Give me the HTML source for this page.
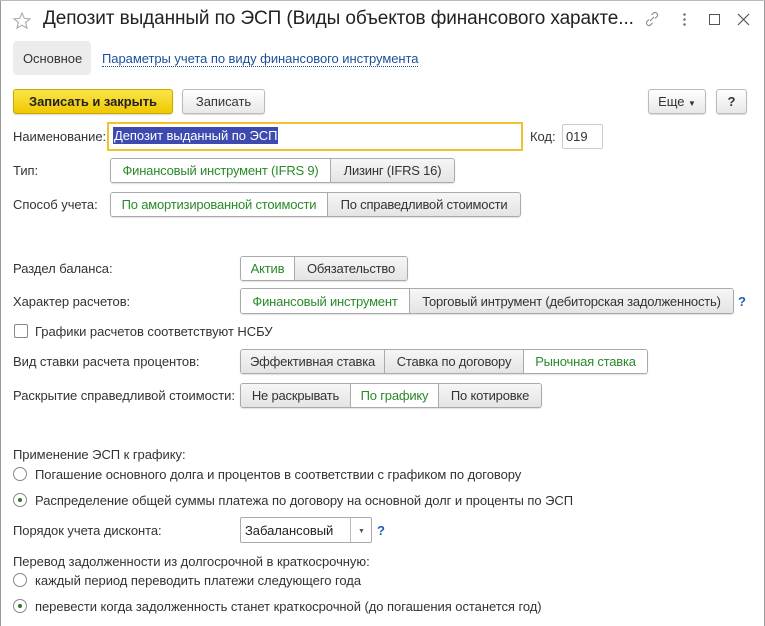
<!DOCTYPE html>
<html><head><meta charset="utf-8"><style>
*{box-sizing:border-box;margin:0;padding:0}
body{width:765px;height:626px;background:#fff;font-family:"Liberation Sans",Arial,sans-serif;font-size:13px;color:#333;position:relative;overflow:hidden;letter-spacing:-0.05px}
.a{position:absolute;white-space:nowrap}
.lbl{position:absolute;white-space:nowrap;line-height:16px;margin-top:1px}
.btn{position:absolute;border:1px solid #bbb;border-radius:3px;background:linear-gradient(#fff,#e8e8e8);box-shadow:0 1px 1px rgba(0,0,0,.15);text-align:center;color:#333}
.grp{position:absolute;display:flex;border:1px solid #aaa;border-radius:3px;overflow:hidden;box-shadow:0 1px 1px rgba(0,0,0,.12)}
.grp div{height:100%;display:flex;align-items:center;justify-content:center;background:linear-gradient(#f6f6f6,#e4e4e4);border-left:1px solid #aaa;color:#333;letter-spacing:-0.2px}
.grp div:first-child{border-left:none}
.grp div.on{background:#fff;color:#2a8a2a}
.rad{position:absolute;width:14px;height:14px;border:1px solid #888;border-radius:50%;background:#fff}
.rad.on::after{content:"";position:absolute;left:4px;top:4px;width:4px;height:4px;border-radius:50%;background:#2a7a2a}
</style></head><body>
<div class="a" style="left:0;top:0;width:1px;height:626px;background:#999"></div>
<div class="a" style="right:0;top:0;width:1px;height:626px;background:#999"></div>
<div class="a" style="left:0;top:0;width:765px;height:1px;background:#bbb"></div>
<svg class="a" style="left:12px;top:11px" width="20" height="20" viewBox="0 0 20 20"><path d="M10 2 L12.3 7.4 L18 7.8 L13.6 11.5 L15 17.2 L10 14.2 L5 17.2 L6.4 11.5 L2 7.8 L7.7 7.4 Z" fill="none" stroke="#aaa" stroke-width="1.1"/></svg>
<div class="a" style="left:43px;top:8px;font-size:19px;color:#222;letter-spacing:-0.1px">Депозит выданный по ЭСП (Виды объектов финансового характе...</div>
<svg class="a" style="left:643px;top:10px" width="18" height="18" viewBox="0 0 18 18"><path d="M7 11 L11 7 M8.5 5 L10.5 3 a2.5 2.5 0 0 1 3.5 3.5 L12 8.5 M9.5 13 L7.5 15 a2.5 2.5 0 0 1 -3.5 -3.5 L6 9.5" fill="none" stroke="#888" stroke-width="1.1"/></svg>
<div class="a" style="left:683px;top:12px;width:3px;height:14px;background:radial-gradient(circle,#777 1.2px,transparent 1.4px) 0 0/3px 5px"></div>
<div class="a" style="left:709px;top:14px;width:11px;height:11px;border:1.2px solid #555"></div>
<svg class="a" style="left:737px;top:13px" width="13" height="13" viewBox="0 0 13 13"><path d="M1 1 L12 12 M12 1 L1 12" stroke="#555" stroke-width="1.2"/></svg>
<div class="a" style="left:13px;top:41px;width:78px;height:34px;background:#ececec;border-radius:4px"></div>
<div class="lbl" style="left:23px;top:50px">Основное</div>
<div class="lbl" style="left:102px;top:50px;color:#1c4f9c;border-bottom:1px dotted #1c4f9c;line-height:15px">Параметры учета по виду финансового инструмента</div>
<div class="btn" style="left:13px;top:89px;width:160px;height:25px;background:linear-gradient(#fbe54a,#f0c800);border-color:#c9a800;font-weight:bold;color:#222;line-height:23px">Записать и закрыть</div>
<div class="btn" style="left:182px;top:89px;width:83px;height:25px;line-height:23px">Записать</div>
<div class="btn" style="left:648px;top:89px;width:58px;height:25px;line-height:23px">Еще <span style="font-size:8px">▼</span></div>
<div class="btn" style="left:716px;top:89px;width:31px;height:25px;line-height:23px;font-weight:bold">?</div>
<div class="lbl" style="left:13px;top:128px">Наименование:</div>
<div class="a" style="left:107px;top:122px;width:416px;height:29px;border:2px solid #f2c12e;background:#fff"></div>
<div class="a" style="left:113px;top:127px;height:17px;background:#3d4bb0;color:#fff;padding:0 1px;line-height:17px">Депозит выданный по ЭСП</div>
<div class="lbl" style="left:530px;top:128px">Код:</div>
<div class="a" style="left:562px;top:124px;width:41px;height:25px;border:1px solid #ccc;border-radius:2px;padding:4px 3px">019</div>
<div class="lbl" style="left:13px;top:162px">Тип:</div>
<div class="grp" style="left:110px;top:158px;height:25px"><div class="on" style="width:219px">Финансовый инструмент (IFRS 9)</div><div style="width:124px">Лизинг (IFRS 16)</div></div>
<div class="lbl" style="left:13px;top:196px">Способ учета:</div>
<div class="grp" style="left:110px;top:192px;height:25px"><div class="on" style="width:216px">По амортизированной стоимости</div><div style="width:193px">По справедливой стоимости</div></div>
<div class="lbl" style="left:13px;top:260px">Раздел баланса:</div>
<div class="grp" style="left:240px;top:256px;height:25px"><div class="on" style="width:53px">Актив</div><div style="width:113px">Обязательство</div></div>
<div class="lbl" style="left:13px;top:293px">Характер расчетов:</div>
<div class="grp" style="left:240px;top:288px;height:26px"><div class="on" style="width:168px">Финансовый инструмент</div><div style="width:324px">Торговый интрумент (дебиторская задолженность)</div></div>
<div class="lbl" style="left:738px;top:293px;color:#1c5fb0;font-weight:bold">?</div>
<div class="a" style="left:14px;top:324px;width:14px;height:14px;border:1px solid #888;border-radius:2px;background:#fff"></div>
<div class="lbl" style="left:35px;top:323px">Графики расчетов соответствуют НСБУ</div>
<div class="lbl" style="left:13px;top:353px">Вид ставки расчета процентов:</div>
<div class="grp" style="left:240px;top:349px;height:25px"><div style="width:143px">Эффективная ставка</div><div style="width:139px">Ставка по договору</div><div class="on" style="width:124px">Рыночная ставка</div></div>
<div class="lbl" style="left:13px;top:387px">Раскрытие справедливой стоимости:</div>
<div class="grp" style="left:240px;top:383px;height:25px"><div style="width:109px">Не раскрывать</div><div class="on" style="width:88px">По графику</div><div style="width:103px">По котировке</div></div>
<div class="lbl" style="left:13px;top:446px">Применение ЭСП к графику:</div>
<div class="rad" style="left:13px;top:467px"></div>
<div class="lbl" style="left:35px;top:466px">Погашение основного долга и процентов в соответствии с графиком по договору</div>
<div class="rad on" style="left:13px;top:493px"></div>
<div class="lbl" style="left:35px;top:492px">Распределение общей суммы платежа по договору на основной долг и проценты по ЭСП</div>
<div class="lbl" style="left:13px;top:522px">Порядок учета дисконта:</div>
<div class="a" style="left:240px;top:517px;width:132px;height:26px;border:1px solid #aaa;border-radius:2px;background:#fff"></div>
<div class="lbl" style="left:245px;top:522px;color:#222">Забалансовый</div>
<div class="a" style="left:350px;top:518px;width:1px;height:24px;background:#bbb"></div>
<div class="lbl" style="left:358px;top:523px;font-size:7px;color:#555">▼</div>
<div class="lbl" style="left:377px;top:522px;color:#1c5fb0;font-weight:bold">?</div>
<div class="lbl" style="left:13px;top:553px">Перевод задолженности из долгосрочной в краткосрочную:</div>
<div class="rad" style="left:13px;top:573px"></div>
<div class="lbl" style="left:35px;top:572px">каждый период переводить платежи следующего года</div>
<div class="rad on" style="left:13px;top:599px"></div>
<div class="lbl" style="left:35px;top:598px">перевести когда задолженность станет краткосрочной (до погашения останется год)</div>
</body></html>
